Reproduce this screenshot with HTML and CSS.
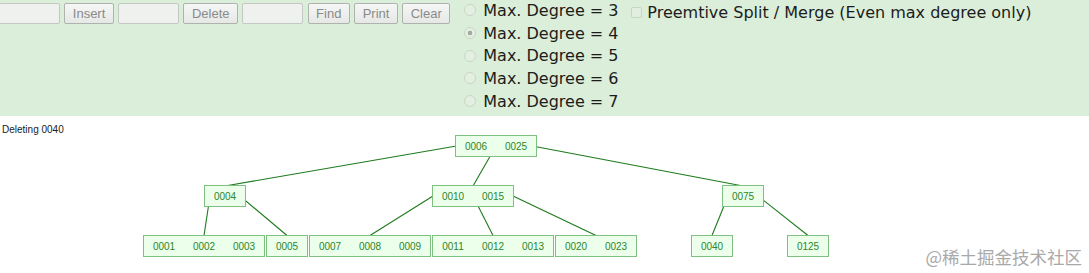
FILE: index.html
```html
<!DOCTYPE html>
<html lang="en">
<head>
    <meta charset="UTF-8">
    <meta name="viewport" content="width=device-width, initial-scale=1.0">
    <title>B-Tree Visualization</title>
    <link rel="stylesheet" href="styles.css">
</head>
<body>
    <div class="panel">
        <div class="controls">
            <input class="field field-first" type="text" disabled>
            <button class="btn" disabled>Insert</button>
            <input class="field" type="text" disabled>
            <button class="btn" disabled>Delete</button>
            <input class="field" type="text" disabled>
            <button class="btn" disabled>Find</button>
            <button class="btn" disabled>Print</button>
            <button class="btn" disabled>Clear</button>
        </div>
        <div class="degrees">
            <label class="degree"><input class="radio" type="radio" name="degree" disabled><span>Max. Degree = 3</span></label>
            <label class="degree"><input class="radio" type="radio" name="degree" checked disabled><span>Max. Degree = 4</span></label>
            <label class="degree"><input class="radio" type="radio" name="degree" disabled><span>Max. Degree = 5</span></label>
            <label class="degree"><input class="radio" type="radio" name="degree" disabled><span>Max. Degree = 6</span></label>
            <label class="degree"><input class="radio" type="radio" name="degree" disabled><span>Max. Degree = 7</span></label>
        </div>
        <label class="preempt"><input class="check" type="checkbox" disabled><span>Preemtive Split / Merge (Even max degree only)</span></label>
    </div>

    <div class="canvas">
        <div class="status">Deleting 0040</div>

        <!-- viewBox starts at page y=116 so node coordinates read as page pixels -->
        <svg class="tree" viewBox="0 116 1089 157" xmlns="http://www.w3.org/2000/svg">
            <g class="edges">
                <line x1="456.5" y1="146" x2="225" y2="186"/>
                <line x1="496" y1="146" x2="473" y2="186"/>
                <line x1="535" y1="146.5" x2="743" y2="186"/>

                <line x1="210" y1="196" x2="204" y2="235.5"/>
                <line x1="240" y1="196" x2="287" y2="235.5"/>

                <line x1="433" y1="196" x2="370" y2="235.5"/>
                <line x1="473" y1="196" x2="493" y2="235.5"/>
                <line x1="513" y1="196" x2="596" y2="235.5"/>

                <line x1="728" y1="196" x2="712" y2="235.5"/>
                <line x1="758" y1="196" x2="808" y2="235.5"/>
            </g>

            <g class="nodes">
                <rect x="455.5" y="135.5" width="81" height="21"/>

                <rect x="204.5" y="185.5" width="41" height="21"/>
                <rect x="432.5" y="185.5" width="81" height="21"/>
                <rect x="722.5" y="185.5" width="41" height="21"/>

                <rect x="143.5" y="235.5" width="121" height="21"/>
                <rect x="266.5" y="235.5" width="41" height="21"/>
                <rect x="309.5" y="235.5" width="121" height="21"/>
                <rect x="432.5" y="235.5" width="121" height="21"/>
                <rect x="555.5" y="235.5" width="81" height="21"/>
                <rect x="691.5" y="235.5" width="41" height="21"/>
                <rect x="787.5" y="235.5" width="41" height="21"/>
            </g>

            <g class="keys">
                <text x="476" y="149.5">0006</text>
                <text x="516" y="149.5">0025</text>

                <text x="225" y="199.5">0004</text>
                <text x="453" y="199.5">0010</text>
                <text x="493" y="199.5">0015</text>
                <text x="743" y="199.5">0075</text>

                <text x="164" y="249.5">0001</text>
                <text x="204" y="249.5">0002</text>
                <text x="244" y="249.5">0003</text>
                <text x="287" y="249.5">0005</text>
                <text x="330" y="249.5">0007</text>
                <text x="370" y="249.5">0008</text>
                <text x="410" y="249.5">0009</text>
                <text x="453" y="249.5">0011</text>
                <text x="493" y="249.5">0012</text>
                <text x="533" y="249.5">0013</text>
                <text x="576" y="249.5">0020</text>
                <text x="616" y="249.5">0023</text>
                <text x="712" y="249.5">0040</text>
                <text x="808" y="249.5">0125</text>
            </g>
        </svg>

        <div class="watermark">@稀土掘金技术社区</div>
    </div>
</body>
</html>
```

FILE: styles.css
```css
html, body {
    margin: 0;
    padding: 0;
    width: 100%;
    height: 100%;
    overflow: hidden;
    background-color: #ffffff;
    font-family: "Liberation Sans", Arial, sans-serif;
}

.panel {
    display: flex;
    align-items: flex-start;
    height: 116px;
    background-color: #dbeed9;
}

.controls {
    display: flex;
    gap: 4.3px;
    padding-top: 3px;
    margin-left: -1px;
}

.field {
    box-sizing: border-box;
    width: 61px;
    height: 21px;
    margin: 0;
    border: 1px solid #c3c8c3;
    border-radius: 2px;
    background-color: #eef1ee;
}

.btn {
    box-sizing: border-box;
    height: 21px;
    margin: 0;
    padding: 0 7.5px;
    border: 1px solid #aeb3ae;
    border-radius: 2px;
    background: linear-gradient(#f5f6f5, #e6e8e6);
    color: #8a8a8a;
    font-family: "Liberation Sans", Arial, sans-serif;
    font-size: 13px;
    line-height: 19px;
}

.degrees {
    display: flex;
    flex-direction: column;
    width: 170px;
    margin-top: -1px;
    margin-left: 8px;
}

.degree,
.preempt {
    display: flex;
    align-items: center;
    height: 22.7px;
    font-family: "DejaVu Sans", Verdana, sans-serif;
    font-size: 16px;
    color: #1c1c1c;
    white-space: nowrap;
}

.radio {
    appearance: none;
    box-sizing: border-box;
    width: 12px;
    height: 12px;
    margin: 0 7px 0 6px;
    border: 1px solid #c9d6c7;
    border-radius: 50%;
    background-color: #e3efe1;
}

.radio:checked {
    background: radial-gradient(circle, #a3a8a3 0, #a3a8a3 2px, #e3efe1 2.6px);
}

.preempt {
    margin-top: 1px;
}

.check {
    appearance: none;
    box-sizing: border-box;
    width: 11px;
    height: 11px;
    margin: 0 5px 0 3px;
    border: 1px solid #c8d4c6;
    border-radius: 2px;
    background-color: #e2eee0;
}

.canvas {
    position: relative;
    height: 157px;
}

.status {
    padding: 8px 0 0 2px;
    font-size: 10px;
    line-height: 12px;
    color: #1a1a1a;
}

.tree {
    position: absolute;
    top: 0;
    left: 0;
    width: 1089px;
    height: 157px;
}

.edges line {
    stroke: #1d7a1d;
    stroke-width: 1.1;
}

.nodes rect {
    fill: #ebffeb;
    stroke: #7fbf7f;
    stroke-width: 1;
}

.keys text {
    fill: #2c862c;
    font-family: "Liberation Sans", Arial, sans-serif;
    font-size: 10px;
    text-anchor: middle;
}

.watermark {
    position: absolute;
    right: 7px;
    bottom: 4px;
    font-family: "Noto Sans CJK SC", sans-serif;
    font-size: 17.5px;
    color: #a9a9a9;
}
```
